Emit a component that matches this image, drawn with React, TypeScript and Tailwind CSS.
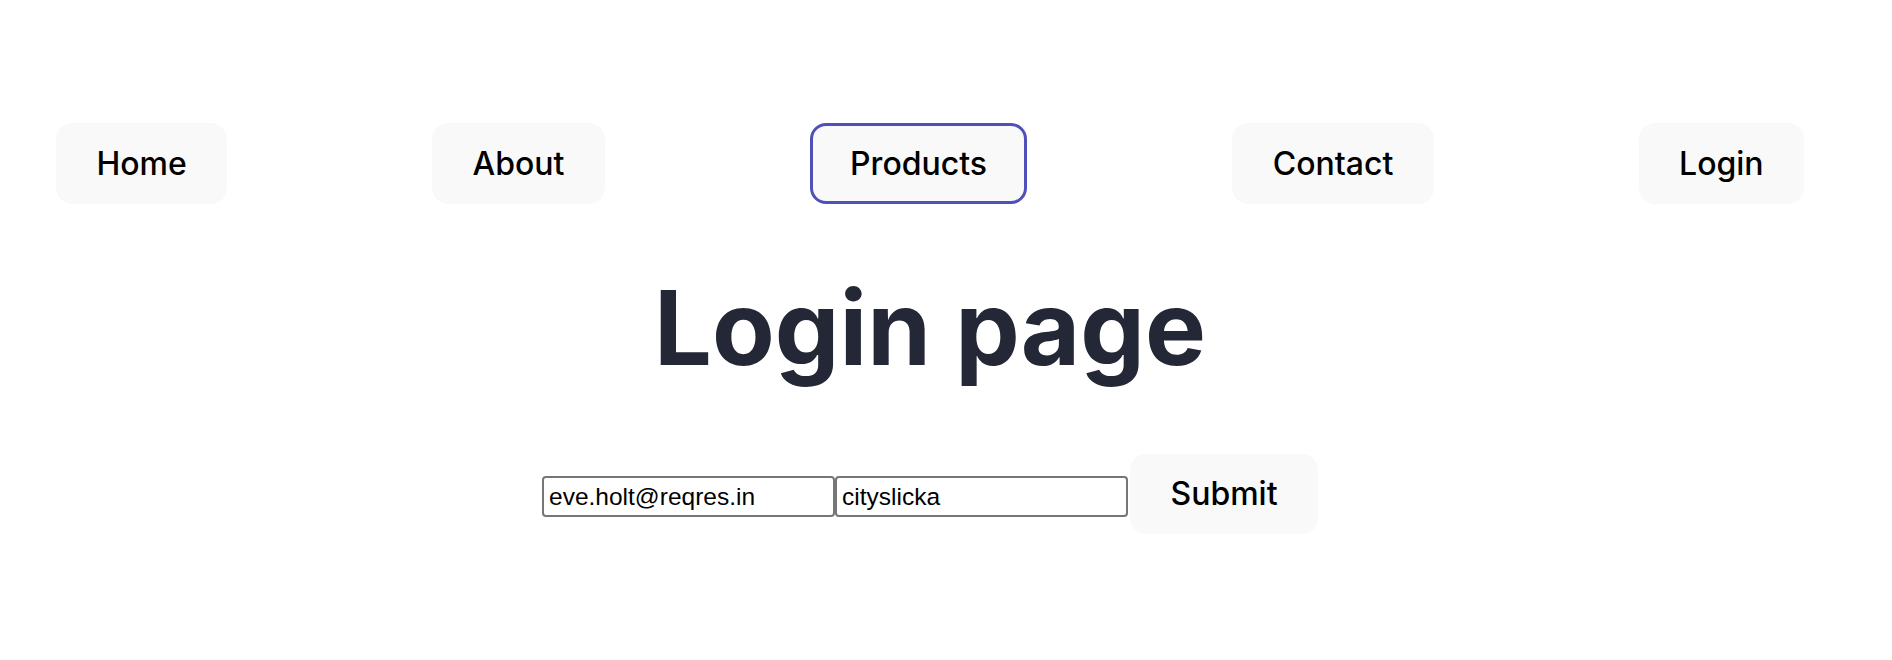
import React from "react";

const navItems = ["Home", "About", "Products", "Contact", "Login"];

export default function App() {
  return (
    <div className="min-h-[660px] w-[1860px] bg-white pt-[123px] font-['Inter',sans-serif]">
      <nav className="flex items-center justify-between pl-[56px] pr-[56px]">
        {navItems.map((item) =>
          item === "Products" ? (
            <button
              key={item}
              className="h-[81px] rounded-[16px] border-[3px] border-[#4f51b8] bg-[#f9f9f9] px-[37.4px] text-[32px] font-medium leading-normal text-black"
            >
              {item}
            </button>
          ) : (
            <button
              key={item}
              className="h-[81px] rounded-[16px] border-2 border-transparent bg-[#f9f9f9] px-[38.4px] text-[32px] font-medium leading-normal text-black"
            >
              {item}
            </button>
          )
        )}
      </nav>
      <h1 className="mt-[68px] text-center text-[102.4px] font-bold leading-[1.1] text-[#232736]">
        Login page
      </h1>
      <form className="mt-[69px] flex items-center justify-center">
        <input
          type="text"
          defaultValue="eve.holt@reqres.in"
          className="mt-[6px] h-[41px] w-[293px] rounded-[4px] border-2 border-[#767676] px-[5px] py-[2px] font-['Liberation_Sans',Arial,sans-serif] text-[24.5px] text-black"
        />
        <input
          type="text"
          defaultValue="cityslicka"
          className="mt-[6px] h-[41px] w-[293px] rounded-[4px] border-2 border-[#767676] px-[5px] py-[2px] font-['Liberation_Sans',Arial,sans-serif] text-[24.5px] text-black"
        />
        <button
          type="button"
          className="ml-[2px] h-[80px] rounded-[16px] border-2 border-transparent bg-[#f9f9f9] px-[38.4px] text-[32px] font-medium leading-normal text-black"
        >
          Submit
        </button>
      </form>
    </div>
  );
}
